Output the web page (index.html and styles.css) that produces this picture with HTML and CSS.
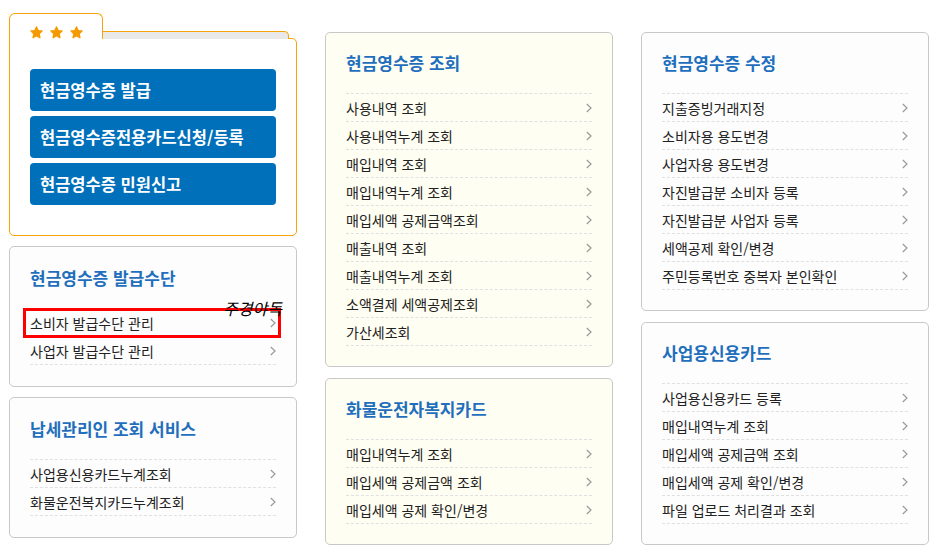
FILE: index.html
```html
<!DOCTYPE html>
<html lang="ko">
<head>
	<meta charset="UTF-8">
	<title>현금영수증</title>
	<link rel="stylesheet" href="styles.css">
</head>
<body>
	<div class="wrap">
		<div class="col col-left">
			<div class="quick">
				<div class="quickHead">
					<div class="quickTab">
						<svg class="star" width="13" height="13" viewBox="0 0 13 13"><polygon points="6.5,1 8.1,4.6 12,5 9.1,7.7 9.9,11.7 6.5,9.7 3.1,11.7 3.9,7.7 1,5 4.9,4.6"/></svg>
						<svg class="star" width="13" height="13" viewBox="0 0 13 13"><polygon points="6.5,1 8.1,4.6 12,5 9.1,7.7 9.9,11.7 6.5,9.7 3.1,11.7 3.9,7.7 1,5 4.9,4.6"/></svg>
						<svg class="star" width="13" height="13" viewBox="0 0 13 13"><polygon points="6.5,1 8.1,4.6 12,5 9.1,7.7 9.9,11.7 6.5,9.7 3.1,11.7 3.9,7.7 1,5 4.9,4.6"/></svg>
					</div>
					<div class="quickStrip"></div>
				</div>
				<div class="quickBody">
					<a href="javascript:;" class="quickBtn">현금영수증 발급</a>
					<a href="javascript:;" class="quickBtn">현금영수증전용카드신청/등록</a>
					<a href="javascript:;" class="quickBtn">현금영수증 민원신고</a>
				</div>
			</div>

			<div class="box">
				<h3>현금영수증 발급수단</h3>
				<ul>
					<li class="on">소비자 발급수단 관리<svg class="arr" width="6" height="10" viewBox="0 0 6 10"><polyline points="0.8,1 5,5 0.8,9"/></svg><span class="mark"></span><span class="stamp">주경야독</span></li>
					<li>사업자 발급수단 관리<svg class="arr" width="6" height="10" viewBox="0 0 6 10"><polyline points="0.8,1 5,5 0.8,9"/></svg></li>
				</ul>
			</div>

			<div class="box">
				<h3>납세관리인 조회 서비스</h3>
				<ul>
					<li>사업용신용카드누계조회<svg class="arr" width="6" height="10" viewBox="0 0 6 10"><polyline points="0.8,1 5,5 0.8,9"/></svg></li>
					<li>화물운전복지카드누계조회<svg class="arr" width="6" height="10" viewBox="0 0 6 10"><polyline points="0.8,1 5,5 0.8,9"/></svg></li>
				</ul>
			</div>
		</div>

		<div class="col col-mid">
			<div class="box cream">
				<h3>현금영수증 조회</h3>
				<ul>
					<li>사용내역 조회<svg class="arr" width="6" height="10" viewBox="0 0 6 10"><polyline points="0.8,1 5,5 0.8,9"/></svg></li>
					<li>사용내역누계 조회<svg class="arr" width="6" height="10" viewBox="0 0 6 10"><polyline points="0.8,1 5,5 0.8,9"/></svg></li>
					<li>매입내역 조회<svg class="arr" width="6" height="10" viewBox="0 0 6 10"><polyline points="0.8,1 5,5 0.8,9"/></svg></li>
					<li>매입내역누계 조회<svg class="arr" width="6" height="10" viewBox="0 0 6 10"><polyline points="0.8,1 5,5 0.8,9"/></svg></li>
					<li>매입세액 공제금액조회<svg class="arr" width="6" height="10" viewBox="0 0 6 10"><polyline points="0.8,1 5,5 0.8,9"/></svg></li>
					<li>매출내역 조회<svg class="arr" width="6" height="10" viewBox="0 0 6 10"><polyline points="0.8,1 5,5 0.8,9"/></svg></li>
					<li>매출내역누계 조회<svg class="arr" width="6" height="10" viewBox="0 0 6 10"><polyline points="0.8,1 5,5 0.8,9"/></svg></li>
					<li>소액결제 세액공제조회<svg class="arr" width="6" height="10" viewBox="0 0 6 10"><polyline points="0.8,1 5,5 0.8,9"/></svg></li>
					<li>가산세조회<svg class="arr" width="6" height="10" viewBox="0 0 6 10"><polyline points="0.8,1 5,5 0.8,9"/></svg></li>
				</ul>
			</div>

			<div class="box cream">
				<h3>화물운전자복지카드</h3>
				<ul>
					<li>매입내역누계 조회<svg class="arr" width="6" height="10" viewBox="0 0 6 10"><polyline points="0.8,1 5,5 0.8,9"/></svg></li>
					<li>매입세액 공제금액 조회<svg class="arr" width="6" height="10" viewBox="0 0 6 10"><polyline points="0.8,1 5,5 0.8,9"/></svg></li>
					<li>매입세액 공제 확인/변경<svg class="arr" width="6" height="10" viewBox="0 0 6 10"><polyline points="0.8,1 5,5 0.8,9"/></svg></li>
				</ul>
			</div>
		</div>

		<div class="col col-right">
			<div class="box">
				<h3>현금영수증 수정</h3>
				<ul>
					<li>지출증빙거래지정<svg class="arr" width="6" height="10" viewBox="0 0 6 10"><polyline points="0.8,1 5,5 0.8,9"/></svg></li>
					<li>소비자용 용도변경<svg class="arr" width="6" height="10" viewBox="0 0 6 10"><polyline points="0.8,1 5,5 0.8,9"/></svg></li>
					<li>사업자용 용도변경<svg class="arr" width="6" height="10" viewBox="0 0 6 10"><polyline points="0.8,1 5,5 0.8,9"/></svg></li>
					<li>자진발급분 소비자 등록<svg class="arr" width="6" height="10" viewBox="0 0 6 10"><polyline points="0.8,1 5,5 0.8,9"/></svg></li>
					<li>자진발급분 사업자 등록<svg class="arr" width="6" height="10" viewBox="0 0 6 10"><polyline points="0.8,1 5,5 0.8,9"/></svg></li>
					<li>세액공제 확인/변경<svg class="arr" width="6" height="10" viewBox="0 0 6 10"><polyline points="0.8,1 5,5 0.8,9"/></svg></li>
					<li>주민등록번호 중복자 본인확인<svg class="arr" width="6" height="10" viewBox="0 0 6 10"><polyline points="0.8,1 5,5 0.8,9"/></svg></li>
				</ul>
			</div>

			<div class="box">
				<h3>사업용신용카드</h3>
				<ul>
					<li>사업용신용카드 등록<svg class="arr" width="6" height="10" viewBox="0 0 6 10"><polyline points="0.8,1 5,5 0.8,9"/></svg></li>
					<li>매입내역누계 조회<svg class="arr" width="6" height="10" viewBox="0 0 6 10"><polyline points="0.8,1 5,5 0.8,9"/></svg></li>
					<li>매입세액 공제금액 조회<svg class="arr" width="6" height="10" viewBox="0 0 6 10"><polyline points="0.8,1 5,5 0.8,9"/></svg></li>
					<li>매입세액 공제 확인/변경<svg class="arr" width="6" height="10" viewBox="0 0 6 10"><polyline points="0.8,1 5,5 0.8,9"/></svg></li>
					<li>파일 업로드 처리결과 조회<svg class="arr" width="6" height="10" viewBox="0 0 6 10"><polyline points="0.8,1 5,5 0.8,9"/></svg></li>
				</ul>
			</div>
		</div>
	</div>
</body>
</html>
```

FILE: styles.css
```css
*{margin: 0;padding: 0;box-sizing: border-box;}
body{
	background: #fff;
	font-family: "Noto Sans CJK KR", "Noto Sans", sans-serif;
	color: #222;
	padding: 13px 0 0 9px;
}
a{text-decoration: none;}
.wrap{
	display: grid;
	grid-template-columns: 288px 288px 288px;
	column-gap: 28px;
	align-items: start;
}
.col{
	display: flex;
	flex-direction: column;
	gap: 11px;
}
.col-left{gap: 10px;}
.col-mid,
.col-right{margin-top: 19px;}

/* 바로가기 카드 */
.quickHead{
	display: flex;
	align-items: flex-end;
	margin-right: 8px;
	margin-bottom: -1px;
	position: relative;
	z-index: 1;
}
.quickTab{
	width: 94px;
	height: 26px;
	padding: 12px 0 0 20px;
	background: #fff;
	border: 1px solid #f7a30a;
	border-bottom: 0;
	border-radius: 6px 6px 0 0;
	display: flex;
	gap: 7px;
}
.star{display: block;}
.star polygon{
	fill: #f59b00;
	stroke: #f59b00;
	stroke-width: 1.4;
	stroke-linejoin: round;
}
.quickStrip{
	flex: 1;
	height: 8px;
	background: #e9e9e9;
	border-top: 1px solid #f7a30a;
	border-right: 1px solid #f7a30a;
	border-radius: 0 5px 0 0;
}
.quickBody{
	border: 1px solid #f7a30a;
	border-radius: 0 5px 5px 5px;
	padding: 30px 20px 30px;
	background: #fff;
}
.quickBtn{
	display: block;
	height: 42px;
	line-height: 42px;
	padding-left: 10px;
	margin-top: 5px;
	background: #0070bb;
	color: #fff;
	font-size: 16.5px;
	font-weight: bold;
	border-radius: 4px;
}
.quickBtn:first-child{margin-top: 0;}

/* 메뉴 카드 */
.box{
	border: 1px solid #c8c8c8;
	border-radius: 5px;
	background: #fdfdfd;
	padding: 19px 20px 20px;
}
.col-left .box{padding: 20px 20px 21px;}
.box.cream{background: #fffef2;}
.box h3{
	font-size: 17px;
	line-height: 22px;
	font-weight: bold;
	color: #1f6fbd;
	margin-bottom: 19px;
}
.box ul{
	list-style: none;
	border-top: 1px dashed #e0e0e0;
}
.box li{
	height: 28px;
	border-bottom: 1px dashed #e0e0e0;
	display: flex;
	align-items: center;
	justify-content: space-between;
	font-size: 14px;
	color: #222;
	position: relative;
}
.arr polyline{
	fill: none;
	stroke: #9a9a9a;
	stroke-width: 1.2;
}

/* 선택 표시 */
.mark{
	position: absolute;
	left: -7px;
	right: -5px;
	top: -1px;
	height: 30px;
	border: 3px solid #f00;
}
.stamp{
	position: absolute;
	left: 193px;
	top: -9px;
	font-size: 16px;
	line-height: 16px;
	font-style: italic;
	color: #000;
	white-space: nowrap;
}
```
